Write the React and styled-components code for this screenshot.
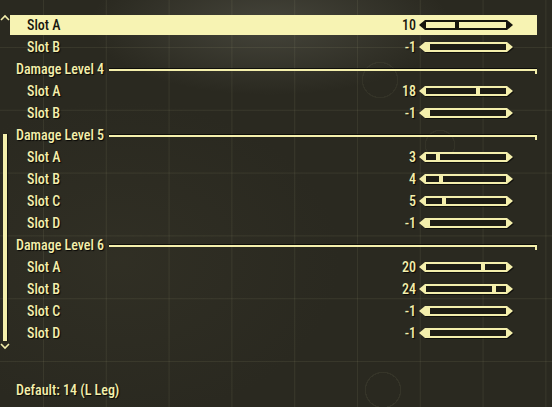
import React from "react";
import styled, { createGlobalStyle } from "styled-components";

const CREAM = "#f4efac";
const INK = "#17160e";

const GlobalStyle = createGlobalStyle`
  html, body {
    margin: 0;
    height: 100%;
  }
  body {
    background-color: #2a2920;
    background-image:
      radial-gradient(circle at 383px 390px, transparent 17px, rgba(200,200,150,0.07) 17px, rgba(200,200,150,0.07) 18px, transparent 18.5px),
      radial-gradient(circle at 380px 80px, transparent 17px, rgba(200,200,150,0.06) 17px, rgba(200,200,150,0.06) 18px, transparent 18.5px),
      radial-gradient(circle at 440px 145px, transparent 14px, rgba(200,200,150,0.06) 14px, rgba(200,200,150,0.06) 15px, transparent 15.5px),
      linear-gradient(to right, rgba(200,200,150,0.09) 1px, transparent 1px),
      linear-gradient(to bottom, rgba(200,200,150,0.09) 1px, transparent 1px),
      radial-gradient(ellipse 180px 70px at 270px 25px, rgba(120,120,108,0.35), transparent),
      radial-gradient(ellipse 220px 160px at 120px 260px, rgba(60,58,44,0.35), transparent);
    background-size: auto, auto, auto, 62.8px 62.8px, 62.8px 62.8px, auto, auto;
    background-position: 0 0, 0 0, 0 0, 43px 0, 0 47px, 0 0, 0 0;
    background-repeat: no-repeat, no-repeat, no-repeat, repeat, repeat, no-repeat, no-repeat;
    font-family: "Roboto Condensed", "Liberation Sans Narrow", "DejaVu Sans Condensed", Roboto, sans-serif;
    font-stretch: condensed;
    font-weight: 500;
    color: ${CREAM};
  }
`;

const Screen = styled.div`
  height: 407px;
  display: flex;
  flex-direction: column;
  overflow: hidden;
`;

const Body = styled.div`
  display: flex;
  padding-top: 14px;
`;

const ScrollCol = styled.div`
  width: 10px;
  display: flex;
  flex-direction: column;
  align-items: center;
`;

const Chevron = styled.svg`
  display: block;
  width: 10px;
  height: 7px;
  margin-top: ${(p) => p.$top || 0}px;
`;

const ScrollTrack = styled.div`
  height: 320px;
  display: flex;
  flex-direction: column;
  justify-content: flex-end;
  align-items: center;
`;

const ScrollThumb = styled.div`
  width: 4px;
  height: 207px;
  background: ${CREAM};
  box-shadow: 1px 0 1px rgba(0, 0, 0, 0.6);
`;

const List = styled.div`
  flex: 1;
  margin-right: 15px;
  display: flex;
  flex-direction: column;
`;

const Row = styled.div`
  height: 22px;
  display: flex;
  align-items: center;
  padding: 1px 0;
  box-sizing: border-box;
`;

const RowInner = styled.div`
  flex: 1;
  height: 20px;
  display: flex;
  align-items: center;
  padding-left: 17px;
  padding-right: 24px;
  background: ${(p) => (p.$active ? "#f7f3b3" : "transparent")};
  color: ${(p) => (p.$active ? INK : CREAM)};
  font-size: 14px;
  text-shadow: ${(p) => (p.$active ? "none" : "1px 1px 1px rgba(0,0,0,0.85)")};
`;

const Label = styled.span`
  flex: 1;
`;

const Value = styled.span`
  margin-right: 3px;
`;

const Header = styled.div`
  height: 22px;
  display: flex;
  align-items: center;
  gap: 5px;
  padding-left: 6px;
  font-size: 14px;
  text-shadow: 1px 1px 1px rgba(0, 0, 0, 0.85);
`;

const Rule = styled.div`
  flex: 1;
  height: 2px;
  margin-top: 1px;
  background: ${CREAM};
  box-shadow: 0 -1px 0 rgba(0, 0, 0, 0.7);
  position: relative;
  &::after {
    content: "";
    position: absolute;
    right: 0;
    top: 0;
    width: 2px;
    height: 5px;
    background: ${CREAM};
  }
`;

const Slider = styled.div`
  width: 94px;
  height: 11px;
  display: flex;
  align-items: center;
  flex-shrink: 0;
  filter: ${(p) => (p.$active ? "none" : "drop-shadow(1px 1px 0.5px rgba(0,0,0,0.6))")};
`;

const Arrow = styled.div`
  flex-shrink: 0;
  width: 0;
  height: 0;
  border-top: 5.5px solid transparent;
  border-bottom: 5.5px solid transparent;
  ${(p) => (p.$dir === "left" ? "border-right" : "border-left")}: 6px solid
    ${(p) => (p.$active ? INK : CREAM)};
`;

const Track = styled.div`
  flex: 1;
  height: 10px;
  box-sizing: border-box;
  border: 2px solid ${(p) => (p.$active ? INK : CREAM)};
  border-left-width: 1px;
  border-right-width: 1px;
  background: ${(p) => (p.$active ? "#f7f3b3" : "#1e1d15")};
  position: relative;
`;

const Thumb = styled.div`
  position: absolute;
  top: 0;
  bottom: 0;
  width: 4px;
  background: ${(p) => (p.$active ? INK : CREAM)};
`;

const Footer = styled.div`
  margin-top: auto;
  padding: 0 0 7px 16px;
  height: 20px;
  line-height: 20px;
  font-size: 14px;
  text-shadow: 1px 1px 1px rgba(0, 0, 0, 0.85);
`;

const MIN = -1;
const MAX = 28;

const sections = [
  {
    title: null,
    slots: [
      { name: "Slot A", value: 10, active: true },
      { name: "Slot B", value: -1 },
    ],
  },
  {
    title: "Damage Level 4",
    slots: [
      { name: "Slot A", value: 18 },
      { name: "Slot B", value: -1 },
    ],
  },
  {
    title: "Damage Level 5",
    slots: [
      { name: "Slot A", value: 3 },
      { name: "Slot B", value: 4 },
      { name: "Slot C", value: 5 },
      { name: "Slot D", value: -1 },
    ],
  },
  {
    title: "Damage Level 6",
    slots: [
      { name: "Slot A", value: 20 },
      { name: "Slot B", value: 24 },
      { name: "Slot C", value: -1 },
      { name: "Slot D", value: -1 },
    ],
  },
];

const SlotSlider = ({ value, active }) => {
  const pct = (value - MIN) / (MAX - MIN);
  return (
    <Slider $active={active}>
      <Arrow $dir="left" $active={active} />
      <Track $active={active}>
        <Thumb $active={active} style={{ left: `calc((100% - 4px) * ${pct})` }} />
      </Track>
      <Arrow $dir="right" $active={active} />
    </Slider>
  );
};

const SlotRow = ({ name, value, active }) => (
  <Row>
    <RowInner $active={active}>
      <Label>{name}</Label>
      <Value>{value}</Value>
      <SlotSlider value={value} active={active} />
    </RowInner>
  </Row>
);

const App = () => (
  <Screen>
    <GlobalStyle />
    <Body>
      <ScrollCol>
        <Chevron viewBox="0 0 10 7">
          <path d="M1 6 L5 2 L9 6" fill="none" stroke={CREAM} strokeWidth="1.6" />
        </Chevron>
        <ScrollTrack>
          <ScrollThumb />
        </ScrollTrack>
        <Chevron viewBox="0 0 10 7" $top={2}>
          <path d="M1 1 L5 5 L9 1" fill="none" stroke={CREAM} strokeWidth="1.6" />
        </Chevron>
      </ScrollCol>
      <List>
        {sections.map((sec, i) => (
          <React.Fragment key={i}>
            {sec.title && (
              <Header>
                <span>{sec.title}</span>
                <Rule />
              </Header>
            )}
            {sec.slots.map((s, j) => (
              <SlotRow key={j} {...s} />
            ))}
          </React.Fragment>
        ))}
      </List>
    </Body>
    <Footer>Default: 14 (L Leg)</Footer>
  </Screen>
);

export default App;
